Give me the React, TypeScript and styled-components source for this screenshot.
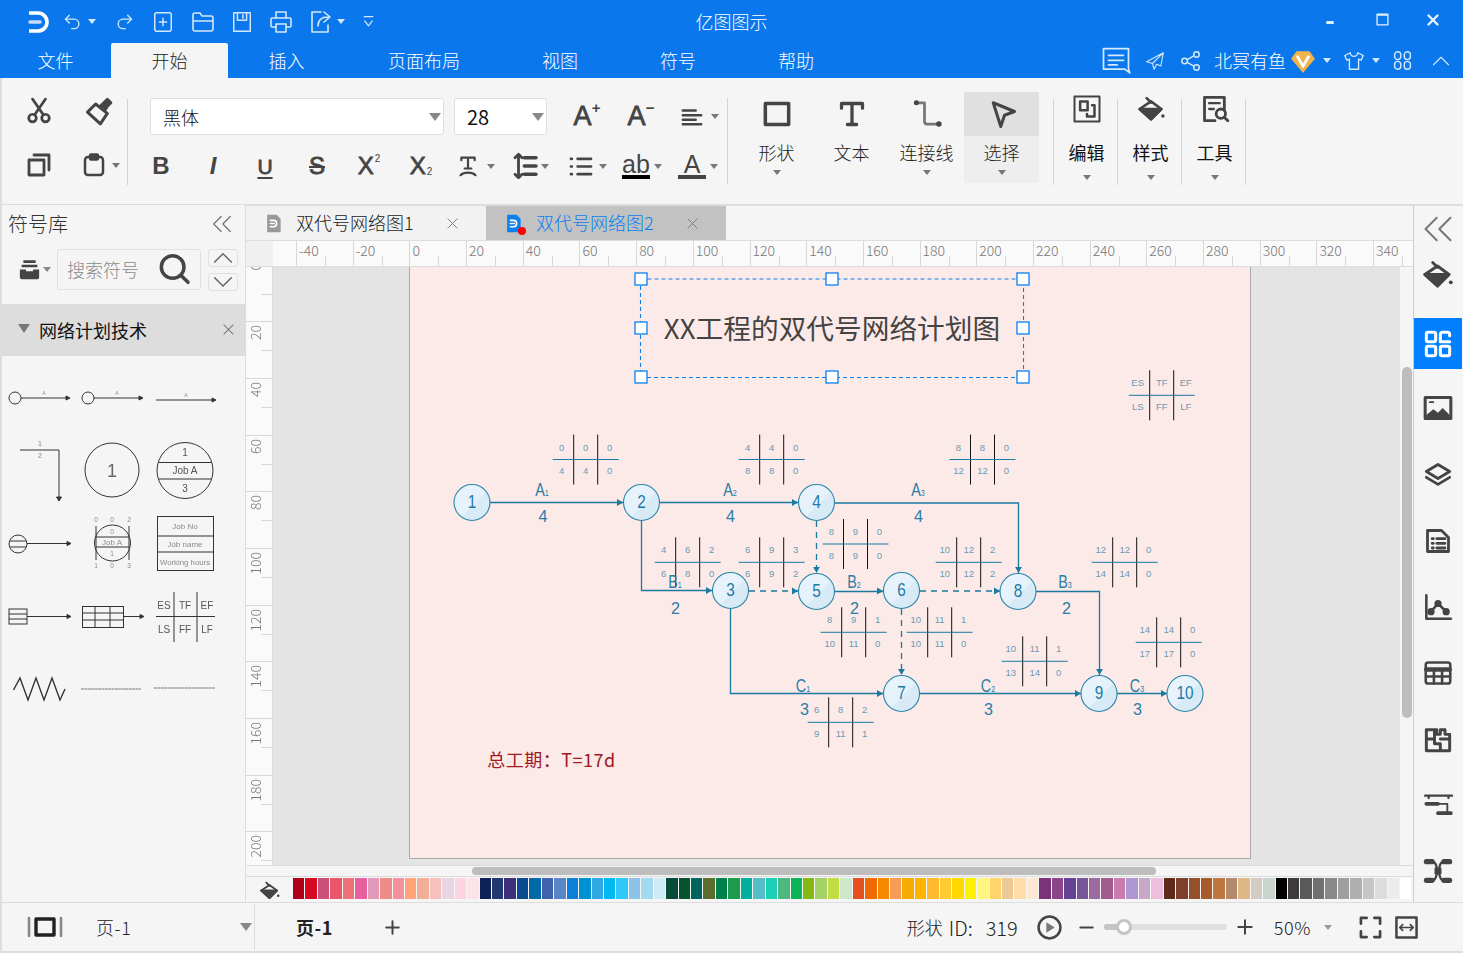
import React from "react"
import styled, {createGlobalStyle} from "styled-components"

const CN = `"Noto Sans CJK SC", "Liberation Sans", sans-serif`
const BLUE = "#0a78ec"
const LINE = "#1a7aa0"

const GlobalStyle = createGlobalStyle`
  html, body {
    margin: 0;
    padding: 0;
    background: #f5f5f5;
    font-family: ${CN};
    overflow: hidden;
  }
`

const AppLayout = styled.div`
  width: 1463px;
  height: 953px;
  display: flex;
  flex-direction: column;
  overflow: hidden;
  background: #f5f5f5;
`

/* generic drawing wrapper for the icons */
const IconSvg = styled.svg<{$w: number; $h: number; $sw: number}>`
  width: ${p => p.$w}px;
  height: ${p => p.$h}px;
  flex: none;
  display: block;
  fill: none;
  stroke: currentColor;
  stroke-width: ${p => p.$sw};
  stroke-linecap: round;
  stroke-linejoin: round;
  overflow: visible;
`

const Ico = ({w = 24, h, sw = 2, vb = "0 0 24 24", children}: {w?: number; h?: number; sw?: number; vb?: string; children: React.ReactNode}) => (
  <IconSvg $w={w} $h={h || w} $sw={sw} viewBox={vb}>{children}</IconSvg>
)

const Caret = styled.i<{$c?: string; $ml?: number; $big?: boolean}>`
  display: block;
  flex: none;
  width: 0;
  height: 0;
  margin-left: ${p => p.$ml ?? 4}px;
  border-left: ${p => (p.$big ? 6 : 4)}px solid transparent;
  border-right: ${p => (p.$big ? 6 : 4)}px solid transparent;
  border-top: ${p => (p.$big ? 8 : 5)}px solid ${p => p.$c || "#777"};
`

/* ---------- title bar ---------- */
const TitleBar = styled.div`
  height: 43px;
  background: ${BLUE};
  color: #d5e7fb;
  display: grid;
  grid-template-columns: 1fr auto 1fr;
  align-items: center;
`

const QuickTools = styled.div`
  display: flex;
  align-items: center;
  padding-left: 27px;
`

const Slot = styled.div<{$w: number}>`
  width: ${p => p.$w}px;
  flex: none;
  display: flex;
  align-items: center;
  justify-content: center;
`

const AppTitle = styled.div`
  color: #fff;
  font-size: 18px;
  font-weight: 300;
  margin-bottom: 1px;
`

const WindowButtons = styled.div`
  display: flex;
  justify-content: flex-end;
  padding: 0 5px 4px 0;
  color: #e6f1fd;
`

const MenuBar = styled.div`
  height: 35px;
  background: ${BLUE};
  display: flex;
  align-items: stretch;
`

const MenuTab = styled.div<{$w: number; $on?: boolean}>`
  width: ${p => p.$w}px;
  display: flex;
  align-items: center;
  justify-content: center;
  padding-bottom: 2px;
  box-sizing: border-box;
  font-size: 18px;
  font-weight: 300;
  border-radius: 2px 2px 0 0;
  color: ${p => (p.$on ? "#222" : "#fff")};
  background: ${p => (p.$on ? "#f5f5f5" : "transparent")};
`

const UserArea = styled.div`
  margin-left: auto;
  display: flex;
  align-items: center;
  color: #d5e7fb;
  padding-right: 12px;
`

const UserName = styled.span`
  color: #fff;
  font-size: 18px;
  font-weight: 300;
  margin: 0 4px 2px 12px;
`

/* ---------- ribbon ---------- */
const Ribbon = styled.div`
  height: 127px;
  box-sizing: border-box;
  background: #f5f5f5;
  border-left: 2px solid #ddd;
  border-bottom: 1px solid #ddd;
  display: flex;
  color: #444;
`

const ClipGroup = styled.div`
  width: 126px;
  height: 86px;
  margin-top: 21px;
  padding-left: 7px;
  box-sizing: border-box;
  border-right: 1px solid #d4d4d4;
  display: grid;
  grid-template-columns: 60px 58px;
  grid-template-rows: 24px 32px;
  row-gap: 26px;
`

const ClipCell = styled.div`
  display: flex;
  align-items: center;
  justify-content: center;
`

const PasteCell = styled(ClipCell)`
  padding-left: 5px;
`

const FormatGroup = styled.div`
  width: 600px;
  height: 86px;
  margin-top: 20px;
  box-sizing: border-box;
  border-right: 1px solid #d4d4d4;
  display: flex;
  flex-direction: column;
`

const FontRow = styled.div`
  display: flex;
  align-items: center;
  height: 37px;
  padding-left: 22px;
`

const StyleRow = styled.div`
  display: flex;
  align-items: center;
  height: 32px;
  margin-top: 15px;
  padding-left: 7px;
`

const SelectBox = styled.div<{$w: number; $ml?: number}>`
  width: ${p => p.$w}px;
  margin-left: ${p => p.$ml || 0}px;
  height: 37px;
  box-sizing: border-box;
  background: #fff;
  border: 1px solid #dedede;
  border-radius: 3px;
  display: flex;
  align-items: center;
  justify-content: space-between;
  padding: 0 2px 0 12px;
  font-size: 18px;
  color: #111;
  font-weight: 300;
`

const SizeValue = styled.span`
  font-size: 20px;
  font-weight: 400;
`

const Glyph = styled.span<{$size?: number; $italic?: boolean; $under?: boolean; $strike?: boolean; $heavy?: boolean}>`
  font-family: "Liberation Sans", sans-serif;
  font-weight: ${p => (p.$heavy ? 700 : 400)};
  font-size: ${p => p.$size || 24}px;
  line-height: 1;
  color: #444;
  -webkit-text-stroke: ${p => (p.$heavy ? 0 : 0.8)}px #444;
  font-style: ${p => (p.$italic ? "italic" : "normal")};
  text-decoration: ${p => (p.$under ? "underline" : p.$strike ? "line-through" : "none")};
  text-decoration-thickness: 2px;
  text-underline-offset: 3px;
  display: flex;
  align-items: flex-start;
`

const Mini = styled.small<{$sub?: boolean; $sign?: boolean}>`
  font-size: ${p => (p.$sign ? 15 : 10)}px;
  font-weight: ${p => (p.$sign ? 700 : 400)};
  -webkit-text-stroke: 0;
  margin-top: ${p => (p.$sub ? 13 : p.$sign ? -3 : 0)}px;
  margin-left: ${p => (p.$sign ? 0 : 1)}px;
`

const BarGlyph = styled.div<{$bar: string}>`
  font-family: "Liberation Sans", sans-serif;
  font-size: 25px;
  line-height: 20px;
  height: 25px;
  box-sizing: border-box;
  width: 28px;
  text-align: center;
  color: #444;
  border-bottom: 4px solid ${p => p.$bar};
`

const BigGroup = styled.div`
  display: flex;
  margin-top: 14px;
  margin-left: 11px;
  height: 91px;
`

const BigButton = styled.div<{$on?: boolean}>`
  width: 75px;
  border-radius: 2px;
  display: flex;
  flex-direction: column;
  align-items: center;
  background: ${p => (p.$on ? "#eee" : "transparent")};
`

const BigIcon = styled.div<{$on?: boolean}>`
  width: 100%;
  height: 44px;
  display: flex;
  align-items: center;
  justify-content: center;
  border-radius: 2px 2px 0 0;
  background: ${p => (p.$on ? "#e0e0e0" : "transparent")};
`

const BigLabel = styled.div`
  font-size: 18px;
  font-weight: 300;
  color: #222;
  line-height: 24px;
  margin-top: 4px;
  margin-bottom: 6px;
`

const ToolGroup = styled.div`
  display: flex;
  margin-top: 21px;
  margin-left: 14px;
  height: 86px;
  border-left: 1px solid #d4d4d4;
`

const ToolButton = styled.div`
  width: 61px;
  height: 86px;
  padding-left: 2px;
  border-right: 1px solid #d4d4d4;
  display: flex;
  flex-direction: column;
  align-items: center;
`

const ToolIcon = styled.div`
  height: 26px;
  margin-top: -3px;
  display: flex;
  align-items: center;
`

const ToolLabel = styled.div`
  font-size: 18px;
  color: #111;
  font-weight: 400;
  line-height: 24px;
  margin: 18px 0 11px;
`

/* ---------- main area ---------- */
const Main = styled.div`
  height: 697px;
  display: flex;
  border-left: 2px solid #ddd;
`

const Sidebar = styled.div`
  width: 244px;
  flex: none;
  box-sizing: border-box;
  border-right: 1px solid #ddd;
  background: #f5f5f5;
  display: flex;
  flex-direction: column;
`

const SideHead = styled.div`
  height: 38px;
  display: flex;
  align-items: center;
  justify-content: space-between;
  padding: 0 13px 1px 6px;
  font-size: 20px;
  font-weight: 300;
  color: #333;
  box-sizing: border-box;
`

const SearchRow = styled.div`
  display: flex;
  align-items: center;
  height: 41px;
  margin-top: 6px;
  padding-left: 17px;
  color: #444;
`

const SearchBox = styled.div`
  width: 144px;
  height: 41px;
  box-sizing: border-box;
  margin-left: 6px;
  border: 1px solid #e0e0e0;
  border-radius: 3px;
  display: flex;
  align-items: center;
  justify-content: space-between;
  padding: 0 10px 1px 9px;
  font-size: 18px;
  font-weight: 300;
  color: #8a8a8a;
`

const SearchGlass = styled.div`
  color: #444;
`

const NudgeColumn = styled.div`
  margin-left: 7px;
  display: flex;
  flex-direction: column;
  gap: 6px;
`

const NudgeButton = styled.div`
  width: 30px;
  height: 18px;
  box-sizing: border-box;
  border: 1px solid #e0e0e0;
  border-radius: 3px;
  color: #666;
  display: flex;
  align-items: center;
  justify-content: center;
`

const SectionHead = styled.div`
  height: 52px;
  margin-top: 14px;
  box-sizing: border-box;
  padding: 0 11px 1px 16px;
  background: #ddd;
  display: flex;
  align-items: center;
  font-size: 18px;
  color: #111;
`

const SectionName = styled.span`
  margin-left: 9px;
  flex: 1;
`

const DownMark = styled.i`
  width: 0;
  height: 0;
  margin-bottom: 3px;
  border-left: 6px solid transparent;
  border-right: 6px solid transparent;
  border-top: 9px solid #777;
`

const SymbolGrid = styled.div`
  display: grid;
  grid-template-columns: repeat(3, 72px);
  grid-auto-rows: 73px;
  padding: 6px 0 0 3px;
`

const SymbolSvg = styled.svg`
  width: 72px;
  height: 73px;
  display: block;
  fill: none;
  stroke: #333;
  stroke-width: 1;
  overflow: hidden;
  filter: blur(0.3px);
  text {
    stroke: none;
    fill: #8a8a8a;
    font-family: "Liberation Sans", sans-serif;
    text-anchor: middle;
  }
`

const CenterColumn = styled.div`
  width: 1167px;
  flex: none;
  display: flex;
  flex-direction: column;
`

const DocTabs = styled.div`
  height: 36px;
  box-sizing: border-box;
  border-top: 1px solid #ddd;
  border-bottom: 1px solid #ddd;
  display: flex;
  background: #f5f5f5;
`

const DocTab = styled.div<{$on?: boolean}>`
  width: 240px;
  display: flex;
  align-items: center;
  padding-left: 18px;
  box-sizing: border-box;
  background: ${p => (p.$on ? "#c2c2c2" : "#f2f2f2")};
  color: ${p => (p.$on ? "#0a7ff0" : "#222")};
  font-size: 18px;
  font-weight: 300;
`

const DocTabName = styled.span`
  margin: 0 0 2px 13px;
  width: 151px;
`

const DocIcon = styled.div`
  position: relative;
  display: flex;
`

const UnsavedDot = styled.i`
  position: absolute;
  right: -3px;
  bottom: -2px;
  width: 8px;
  height: 8px;
  border-radius: 50%;
  background: #f00;
`

const RulerRow = styled.div`
  height: 26px;
  box-sizing: border-box;
  display: flex;
  background: #fafafa;
  border-bottom: 1px solid #ddd;
`

const RulerCorner = styled.div`
  width: 27px;
  flex: none;
  background: #f0f0f0;
`

const RulerTrack = styled.div`
  flex: 1;
  display: flex;
  overflow: hidden;
  padding-left: 23px;
`

const RulerCell = styled.div`
  width: 56.7px;
  flex: none;
  box-sizing: border-box;
  border-left: 1px solid #d8d8d8;
  position: relative;
  font-size: 14px;
  font-weight: 300;
  line-height: 19px;
  padding-left: 2px;
  color: #777;
  &::after {
    content: "";
    position: absolute;
    left: 28px;
    bottom: 0;
    height: 10px;
    border-left: 1px solid #d8d8d8;
  }
`

const WorkRow = styled.div`
  height: 598px;
  display: flex;
`

const VRuler = styled.div`
  width: 27px;
  flex: none;
  box-sizing: border-box;
  background: #fafafa;
  border-right: 1px solid #ddd;
  overflow: hidden;
`

const VRulerText = styled.span`
  position: absolute;
  left: 1px;
  top: 3px;
  writing-mode: vertical-rl;
  transform: rotate(180deg);
  font-size: 14px;
  font-weight: 300;
  line-height: 16px;
  color: #777;
`

const VRulerCell = styled.div`
  height: 56.7px;
  box-sizing: border-box;
  border-top: 1px solid #d8d8d8;
  position: relative;
  &:first-child {
    margin-top: -2.4px;
  }
  &:first-child ${VRulerText} {
    top: -3px;
  }
  &::after {
    content: "";
    position: absolute;
    right: 0;
    top: 28px;
    width: 11px;
    border-top: 1px solid #d8d8d8;
  }
`

const Canvas = styled.div`
  flex: 1;
  background: #e4e4e4;
  padding-left: 136px;
  overflow: hidden;
`

const Page = styled.div`
  width: 842px;
  height: 592px;
  box-sizing: border-box;
  background: #fceae8;
  border: 1px solid #aaa;
  border-top: 0;
`

const DiagramSvg = styled.svg`
  display: block;
  margin-left: -1px;
  overflow: visible;
  text {
    font-family: "Liberation Sans", sans-serif;
    text-anchor: middle;
    dominant-baseline: central;
  }
  text.cn {
    font-family: ${CN};
  }
`

const VScrollTrack = styled.div`
  width: 13px;
  flex: none;
  background: #f5f5f5;
  padding-top: 100px;
  box-sizing: border-box;
`

const VThumb = styled.div`
  width: 10px;
  height: 351px;
  margin-left: 2px;
  border-radius: 5px;
  background: #bdbdbd;
`

const HScrollTrack = styled.div`
  height: 12px;
  box-sizing: border-box;
  border-top: 1px solid #ddd;
  border-bottom: 1px solid #ddd;
  background: #f5f5f5;
  padding: 1px 0 0 226px;
`

const HThumb = styled.div`
  width: 684px;
  height: 8px;
  border-radius: 4px;
  background: #bdbdbd;
`

const PaletteRow = styled.div`
  height: 25px;
  box-sizing: border-box;
  display: flex;
  align-items: flex-start;
  padding-top: 1px;
  color: #444;
`

const PaletteIcon = styled.div`
  width: 47px;
  flex: none;
  height: 24px;
  display: flex;
  align-items: center;
  padding-left: 14px;
  box-sizing: border-box;
`

const Swatch = styled.div<{$c: string}>`
  flex: 1;
  height: 21px;
  margin-right: 1px;
  background: ${p => p.$c};
`

const RightPanel = styled.div`
  width: 50px;
  flex: none;
  box-sizing: border-box;
  border-left: 1px solid #ccc;
  border-top: 1px solid #ddd;
  display: flex;
  flex-direction: column;
  align-items: center;
  color: #444;
`

const PanelItem = styled.div<{$on?: boolean; $h: number}>`
  width: 48px;
  flex: none;
  margin-right: 2px;
  margin-top: ${p => (p.$on ? 21 : 0)}px;
  height: ${p => p.$h}px;
  display: flex;
  align-items: center;
  justify-content: center;
  background: ${p => (p.$on ? "#0080ff" : "transparent")};
  color: ${p => (p.$on ? "#fff" : "#444")};
`

/* ---------- status bar ---------- */
const StatusBar = styled.div`
  height: 51px;
  box-sizing: border-box;
  border-top: 1px solid #ddd;
  border-left: 2px solid #ddd;
  border-bottom: 2px solid #ddd;
  display: flex;
  align-items: center;
  color: #444;
  font-size: 18px;
  font-weight: 300;
`

const PageSelect = styled.div`
  width: 227px;
  height: 46px;
  margin-left: 26px;
  box-sizing: border-box;
  display: flex;
  align-items: center;
  border-right: 1px solid #ddd;
  padding-right: 2px;
  color: #222;
`

const PageName = styled.span<{$bold?: boolean}>`
  font-weight: ${p => (p.$bold ? 700 : 300)};
  letter-spacing: 0.6px;
  color: #222;
  margin-left: ${p => (p.$bold ? 41 : 34)}px;
  flex: ${p => (p.$bold ? "none" : 1)};
`

const StatusRight = styled.div`
  margin-left: auto;
  display: flex;
  align-items: center;
  padding-right: 45px;
`

const ShapeId = styled.span`
  color: #222;
  margin-right: 19px;
  display: flex;
  align-items: center;
`

const IdValue = styled.span<{$ml: number}>`
  font-size: 20px;
  margin-left: ${p => p.$ml}px;
`

const Slider = styled.div`
  width: 123px;
  height: 6px;
  border-radius: 3px;
  background: #e0e0e0;
  margin: 0 10px;
  position: relative;
`

const SliderFill = styled.div`
  width: 20px;
  height: 6px;
  border-radius: 3px;
  background: #c4c4c4;
`

const SliderKnob = styled.div`
  position: absolute;
  left: 12px;
  top: -5px;
  width: 16px;
  height: 16px;
  box-sizing: border-box;
  border: 3px solid #c4c4c4;
  border-radius: 50%;
  background: #fff;
`

const Zoom = styled.span`
  color: #222;
  margin-left: 21px;
  letter-spacing: 0.6px;
`

/* ---------- icons ---------- */
const LogoD = ({w, c = "#fff", bar = "#c8ddf8"}: {w: number; c?: string; bar?: string}) => (
  <Ico w={w} sw={3.6}>
    <path d="M2 3h9a9 9 0 0 1 0 18H2" stroke={c} strokeLinecap="butt"/>
    <path d="M3 12h10" stroke={bar} strokeWidth={3.4}/>
  </Ico>
)

const IconBucket = ({w = 26}: {w?: number}) => (
  <Ico w={w} sw={2.4}>
    <path d="M8 2l4 4"/>
    <path d="M1.500 12L12 5l9.500 7L12 21.500z"/>
    <path d="M1.500 12h20L12 21.500z" fill="currentColor"/>
    <circle cx="23" cy="18.500" r="1.600" fill="currentColor" stroke="none"/>
  </Ico>
)

const ChevronsLeft = ({w = 20}: {w?: number}) => (
  <Ico w={w} sw={1.6}>
    <path d="M11 3L2 12l9 9M22 3l-9 9 9 9" stroke="#777"/>
  </Ico>
)

const PALETTE = [
  "#b00015", "#d60a20", "#c95078", "#ea5668", "#ef7076", "#e8609e", "#e39ab8", "#ef8c88", "#f3929e", "#fea478",
  "#f2ae96", "#f7c0bc", "#e8d5e6", "#fdd4e2", "#fde2e8", "#0f2257", "#22396f", "#3e2f7c", "#0a4a8e", "#0069a8",
  "#3e62ae", "#5a86c6", "#0b80d8", "#0090d4", "#2ea9e3", "#00b9f2", "#2fc8f8", "#8dc2ea", "#a4daf0", "#ceebf6",
  "#064a38", "#04552e", "#00645e", "#5c6b2e", "#00804a", "#1d9a4a", "#00b09e", "#55bdc6", "#1bcfb4", "#4cba80",
  "#0db358", "#84b90f", "#a5d169", "#c2dc44", "#cde8c8", "#e65020", "#f06a00", "#f58a00", "#f79c55", "#f5ab00",
  "#ffb400", "#ffba30", "#ffcb30", "#ffd900", "#fff200", "#fff580", "#ffd46a", "#ecca96", "#ffdca8", "#fee8d0",
  "#7b3377", "#8a4589", "#664296", "#785498", "#9a6aa0", "#a05a8c", "#ca7bb0", "#ae96d0", "#c8a8c8", "#ecc0dc",
  "#5e2a1a", "#7e4028", "#944f2c", "#a85a28", "#bf773f", "#b28a6e", "#e0b888", "#d4ccc4", "#c8d4cc", "#000000",
  "#3e3a3a", "#595959", "#707070", "#888888", "#9e9e9e", "#b0b0b0", "#c6c6c6", "#dcdcdc", "#ececec", "#ffffff",
]

const RULER = Array.from({length: 20}, (_, i) => -40 + i * 20)
const VRULER = Array.from({length: 11}, (_, i) => i * 20)

/* ---------- network diagram data (page coordinates) ---------- */
const NODES: [string, number, number][] = [
  ["1", 472, 502.5], ["2", 641.5, 502.5], ["3", 730.5, 590.5], ["4", 816.5, 502.5], ["5", 816.5, 591.5],
  ["6", 901.5, 590.5], ["7", 901.5, 693.5], ["8", 1018, 591.5], ["9", 1099, 693.5], ["10", 1185, 693.5],
]

const EDGES: [string, boolean][] = [
  ["M490 502.5H623", false],
  ["M660 502.5H798", false],
  ["M835 503H1018.5V573", false],
  ["M641.5 521V590.5H712", false],
  ["M749 591H798", true],
  ["M816.5 521V573", true],
  ["M835 591.5H883", false],
  ["M920 591H1000", true],
  ["M901.5 609V675", true],
  ["M1036 591.5H1099.5V675", false],
  ["M730.5 609V693.5H883", false],
  ["M920 693.5H1081", false],
  ["M1117 693.5H1167", false],
]

const ARROWS: [number, number, number][] = [
  [623, 502.5, 0], [798, 502.5, 0], [1018.5, 573, 90], [712, 590.5, 0], [798, 591, 0], [816.5, 573, 90], [883, 591, 0],
  [1000, 591, 0], [901.5, 675, 90], [1099.5, 675, 90], [883, 693.5, 0], [1081, 693.5, 0], [1167, 693.5, 0],
]

const LABELS: [string, string, number, number][] = [
  ["A", "1", 542, 489], ["A", "2", 730, 489], ["A", "3", 918, 489],
  ["B", "1", 675, 581], ["B", "2", 854, 581], ["B", "3", 1065, 581],
  ["C", "1", 803, 685], ["C", "2", 988, 685], ["C", "3", 1137, 685],
]

const DURATIONS: [string, number, number][] = [
  ["4", 543, 516], ["4", 730.5, 516], ["4", 918.5, 516], ["2", 675.5, 608], ["2", 854.5, 608], ["2", 1066.5, 608],
  ["3", 804.5, 709], ["3", 988.5, 709], ["3", 1137.5, 709],
]

const GRIDS: [number, number, string[]][] = [
  [585.7, 459.5, ["0", "0", "0", "4", "4", "0"]],
  [771.7, 459.5, ["4", "4", "0", "8", "8", "0"]],
  [982.5, 459.5, ["8", "8", "0", "12", "12", "0"]],
  [687.7, 562.3, ["4", "6", "2", "6", "8", "0"]],
  [771.7, 562.3, ["6", "9", "3", "6", "9", "2"]],
  [855.5, 544, ["8", "9", "0", "8", "9", "0"]],
  [968.7, 562.3, ["10", "12", "2", "10", "12", "2"]],
  [1124.7, 562.3, ["12", "12", "0", "14", "14", "0"]],
  [1161.7, 395.3, ["ES", "TF", "EF", "LS", "FF", "LF"]],
  [853.7, 632.3, ["8", "9", "1", "10", "11", "0"]],
  [939.7, 632.3, ["10", "11", "1", "10", "11", "0"]],
  [1034.7, 661.3, ["10", "11", "1", "13", "14", "0"]],
  [1168.7, 642.3, ["14", "14", "0", "17", "17", "0"]],
  [840.7, 722.3, ["6", "8", "2", "9", "11", "1"]],
]

const HANDLES: [number, number][] = [
  [641, 279], [832, 279], [1023, 279], [641, 328], [1023, 328], [641, 377], [832, 377], [1023, 377],
]

const TimeGrid = ({x, y, vals}: {x: number; y: number; vals: string[]}) => (
  <g>
    <path d={`M${x - 12} ${y - 25}v50M${x + 12} ${y - 25}v50`} stroke="#111" strokeWidth={1}/>
    <path d={`M${x - 33} ${y}h66`} stroke={LINE} strokeWidth={1}/>
    {vals.map((v, i) => (
      <text key={i} x={x + (i % 3 - 1) * 24} y={y + (i < 3 ? -12.5 : 11)} fontSize={9.5} fill="#6a9ab3">{v}</text>
    ))}
  </g>
)

const Diagram = () => (
  <DiagramSvg width={842} height={592} viewBox="409 267 842 592">
    <defs>
      <linearGradient id="nodeFill" x1="0" y1="0" x2="1" y2="1">
        <stop offset="0" stopColor="#e8f4fc"/>
        <stop offset="0.55" stopColor="#e6f2fb"/>
        <stop offset="0.56" stopColor="#d9eaf7"/>
        <stop offset="1" stopColor="#d9eaf7"/>
      </linearGradient>
    </defs>
    {GRIDS.map(([x, y, vals], i) => <TimeGrid key={i} x={x} y={y} vals={vals}/>)}
    {EDGES.map(([d, dashed], i) => (
      <path key={i} d={d} fill="none" stroke={LINE} strokeWidth={1.3} strokeDasharray={dashed ? "6 5" : undefined}/>
    ))}
    {ARROWS.map(([x, y, r], i) => (
      <path key={i} d="M0 0l-6-3.4v6.8z" fill={LINE} transform={`translate(${x} ${y}) rotate(${r})`}/>
    ))}
    {NODES.map(([n, x, y]) => (
      <g key={n}>
        <circle cx={x} cy={y} r={18} fill="url(#nodeFill)" stroke="#2a85a8" strokeWidth={1.1}/>
        <text transform={`translate(${x} ${y}) scale(.85 1)`} fontSize={18} fill="#1c7aa5">{n}</text>
      </g>
    ))}
    {LABELS.map(([a, s, x, y], i) => (
      <text key={i} transform={`translate(${x} ${y}) scale(.8 1)`} fontSize={18} fill="#2a7ea6">{a}<tspan fontSize={9} dy={4}>{s}</tspan></text>
    ))}
    {DURATIONS.map(([t, x, y], i) => (
      <text key={i} transform={`translate(${x} ${y}) scale(.95 1)`} fontSize={17} fill="#2a7ea6">{t}</text>
    ))}
    <rect x={640.5} y={279} width={383} height={98.5} fill="none" stroke="#0a7ff0" strokeWidth={1.1} strokeDasharray="4 3"/>
    {HANDLES.map(([x, y], i) => (
      <rect key={i} x={x - 6} y={y - 6} width={12} height={12} fill="#fff" stroke="#0a7ff0" strokeWidth={1.3}/>
    ))}
    <text className="cn" x={832} y={327} fontSize={27.7} fill="#444">XX工程的双代号网络计划图</text>
    <text className="cn" x={551.5} y={758.5} fontSize={18} letterSpacing={0.5} fill="#a01822">总工期：T=17d</text>
  </DiagramSvg>
)

/* ---------- symbol library ---------- */
const Arrowed = ({x1, x2, y}: {x1: number; x2: number; y: number}) => (
  <>
    <path d={`M${x1} ${y}H${x2}`}/>
    <path d={`M${x2 + 1} ${y}l-4-2v4z`} fill="#333"/>
  </>
)

const SYMBOLS: React.ReactNode[] = [
  <><circle cx={15} cy={398} r={6}/><Arrowed x1={21} x2={69} y={398}/><text x={44} y={395} fontSize={5}>A</text></>,
  <><circle cx={88} cy={398} r={6}/><Arrowed x1={94} x2={142} y={398}/><text x={117} y={395} fontSize={5}>A</text></>,
  <><Arrowed x1={156} x2={215} y={400}/><text x={186} y={397} fontSize={5}>A</text></>,
  <><path d="M20 450H59V499"/><path d="M59 501l-2.5-4h5z" fill="#333"/><text x={40} y={446} fontSize={7}>1</text><text x={40} y={458} fontSize={7}>2</text></>,
  <><circle cx={112} cy={470} r={27}/><text x={112} y={477} fontSize={18} style={{fill: "#666"}}>1</text></>,
  <><circle cx={185} cy={470.5} r={28}/><path d="M159 462.5H211M159 479H211"/><text x={185} y={456} fontSize={10} style={{fill: "#555"}}>1</text><text x={185} y={474} fontSize={10} style={{fill: "#555"}}>Job A</text><text x={185} y={492} fontSize={10} style={{fill: "#555"}}>3</text></>,
  <><circle cx={18} cy={544} r={9}/><path d="M10 541H26M10 547H26"/><Arrowed x1={27} x2={70} y={543.5}/></>,
  <><path d="M96 526V560M129 526V560M96 537H129M96 547H129"/><circle cx={112.5} cy={543} r={18}/><text x={112} y={545} fontSize={8}>Job A</text><text x={112} y={534} fontSize={6.5}>0</text><text x={112} y={556} fontSize={6.5}>1</text><text x={96} y={522} fontSize={6.5}>0</text><text x={112} y={522} fontSize={6.5}>0</text><text x={129} y={522} fontSize={6.5}>2</text><text x={96} y={568} fontSize={6.5}>1</text><text x={112} y={568} fontSize={6.5}>0</text><text x={129} y={568} fontSize={6.5}>3</text></>,
  <><rect x={157.5} y={516.5} width={56} height={54}/><path d="M157 536H214M157 552H214"/><text x={185} y={529} fontSize={8}>Job No</text><text x={185} y={547} fontSize={8}>Job name</text><text x={185} y={565} fontSize={7.8}>Working hours</text></>,
  <><rect x={9} y={609} width={18} height={15}/><path d="M9 614H27M9 619H27"/><Arrowed x1={27} x2={70} y={616.5}/></>,
  <><rect x={82.5} y={606.5} width={41} height={21}/><path d="M82 613H124M82 620H124M95 606V628M110 606V628"/><Arrowed x1={124} x2={143} y={616.5}/></>,
  <><path d="M174 592V642M197 592V642M156 616.5H215"/><text x={164} y={609} fontSize={10} style={{fill: "#555"}}>ES</text><text x={185} y={609} fontSize={10} style={{fill: "#555"}}>TF</text><text x={207} y={609} fontSize={10} style={{fill: "#555"}}>EF</text><text x={164} y={633} fontSize={10} style={{fill: "#555"}}>LS</text><text x={185} y={633} fontSize={10} style={{fill: "#555"}}>FF</text><text x={207} y={633} fontSize={10} style={{fill: "#555"}}>LF</text></>,
  <path d="M13.5 690L20 678L28 700L36 678L44 700L52 678L60 700L65 689" strokeWidth={1.4}/>,
  <path d="M81 689H141" stroke="#777" strokeDasharray="3 .4"/>,
  <path d="M154 688H215" stroke="#777" strokeDasharray="3 .4"/>,
]

const CELLS = SYMBOLS.map((s, i) => {
  const x = 5 + (i % 3) * 72
  const y = 362 + Math.floor(i / 3) * 73
  return <SymbolSvg key={i} viewBox={`${x} ${y} 72 73`}>{s}</SymbolSvg>
})

const App = () => (
  <AppLayout>
    <GlobalStyle/>

    <TitleBar>
      <QuickTools>
        <Slot $w={24}><LogoD w={24}/></Slot>
        <Slot $w={12}/>
        <Slot $w={18}><Ico w={19} sw={1.7}><path d="M8 4L3 9l5 5M3 9h11a6 6 0 0 1 0 12h-3"/></Ico></Slot>
        <Slot $w={18}><Caret $c="#d5e7fb" $ml={3}/></Slot>
        <Slot $w={15}/>
        <Slot $w={20}><Ico w={19} sw={1.7}><path d="M16 4l5 5-5 5M21 9H10a6 6 0 0 0 0 12h3"/></Ico></Slot>
        <Slot $w={18}/>
        <Slot $w={21}><Ico w={22} sw={1.6}><rect x="3" y="2" width="18" height="20" rx="2"/><path d="M12 8v8M8 12h8"/></Ico></Slot>
        <Slot $w={18}/>
        <Slot $w={23}><Ico w={24} sw={1.6}><path d="M2 19V5a2 2 0 0 1 2-2h5l2 3h9a2 2 0 0 1 2 2v11a2 2 0 0 1-2 2H4a2 2 0 0 1-2-2zM2 11h20"/></Ico></Slot>
        <Slot $w={17}/>
        <Slot $w={21}><Ico w={22} sw={1.6}><path d="M3 2h18v20H3zM7 2v8h10V2M13 4v4"/></Ico></Slot>
        <Slot $w={17}/>
        <Slot $w={24}><Ico w={24} sw={1.6}><path d="M7 8V2h10v6M7 17H3a1 1 0 0 1-1-1V9a1 1 0 0 1 1-1h18a1 1 0 0 1 1 1v7a1 1 0 0 1-1 1h-4M7 14h10v8H7z"/></Ico></Slot>
        <Slot $w={16}/>
        <Slot $w={24}><Ico w={24} sw={1.6}><path d="M12 2H3v20h16v-7M9 16c0-6 4-9 10-9M15 2l6 5-6 5"/></Ico></Slot>
        <Slot $w={13}><Caret $c="#d5e7fb" $ml={3}/></Slot>
        <Slot $w={15}/>
        <Slot $w={14}><Ico w={13} sw={2.2}><path d="M4 3h16M5 11l7 9 7-9"/></Ico></Slot>
      </QuickTools>
      <AppTitle>亿图图示</AppTitle>
      <WindowButtons>
        <Slot $w={52}><Ico w={10} sw={7}><path d="M3 18h18" strokeLinecap="butt"/></Ico></Slot>
        <Slot $w={52}><Ico w={13} sw={2.4}><path d="M2 2h20v20H2zM2 4h20"/></Ico></Slot>
        <Slot $w={50}><Ico w={12} sw={4.8}><path d="M3 3l18 18M21 3L3 21"/></Ico></Slot>
      </WindowButtons>
    </TitleBar>

    <MenuBar>
      <MenuTab $w={111}>文件</MenuTab>
      <MenuTab $w={117} $on>开始</MenuTab>
      <MenuTab $w={117}>插入</MenuTab>
      <MenuTab $w={158}>页面布局</MenuTab>
      <MenuTab $w={114}>视图</MenuTab>
      <MenuTab $w={122}>符号</MenuTab>
      <MenuTab $w={114}>帮助</MenuTab>
      <UserArea>
        <Slot $w={30}><Ico w={30} sw={1.4}><path d="M2 2h20v16.5l1 3-4-3H2zM6 7.5h12M6 11.5h12M6 15h7"/></Ico></Slot>
        <Slot $w={14}/>
        <Slot $w={20}><Ico w={20} sw={1.3}><path d="M22 2L2 13l7 2zM22 2L9 15l2 7 3-6 5 2z"/></Ico></Slot>
        <Slot $w={15}/>
        <Slot $w={22}><Ico w={22} sw={1.6}><circle cx="18" cy="5" r="3"/><circle cx="5" cy="12" r="3"/><circle cx="18" cy="19" r="3"/><path d="M8 10.5l7-4M8 13.5l7 4"/></Ico></Slot>
        <UserName>北冥有鱼</UserName>
        <Slot $w={26}>
          <Ico w={26} h={26} sw={2.6}>
            <path d="M6 3h12l5 7-11 13L1 10z" fill="#f2b44a" stroke="none"/>
            <path d="M7 8l5 9 5-9" stroke="#fff"/>
          </Ico>
        </Slot>
        <Caret $c="#d5e7fb" $ml={7}/>
        <Slot $w={11}/>
        <Slot $w={24}><Ico w={22} sw={1.5}><path d="M8 3L2 6l2 5 3-1v11h10V10l3 1 2-5-6-3a4 4 0 0 1-8 0z"/></Ico></Slot>
        <Caret $c="#d5e7fb" $ml={6}/>
        <Slot $w={11}/>
        <Slot $w={22}><Ico w={21} sw={1.6}><rect x="3" y="2" width="7" height="9" rx="3.5"/><rect x="14" y="2" width="7" height="9" rx="3.5"/><rect x="3" y="13" width="7" height="9" rx="3.5"/><rect x="14" y="13" width="7" height="9" rx="3.5"/></Ico></Slot>
        <Slot $w={18}/>
        <Slot $w={20}><Ico w={18} sw={1.5}><path d="M2 17l10-10 10 10"/></Ico></Slot>
      </UserArea>
    </MenuBar>

    <Ribbon>
      <ClipGroup>
        <ClipCell><Ico w={26} sw={2.5}><circle cx="6" cy="18.5" r="3.5"/><circle cx="18" cy="18.5" r="3.5"/><path d="M8 15.5L18 1M16 15.5L6 1"/></Ico></ClipCell>
        <ClipCell><Ico w={28} sw={2.5}><path d="M10 6l10 8-6 9L3 13z" strokeWidth={2.6}/><path d="M14 8l3-3 3-3 3 3-3 3-2 3" fill="currentColor"/></Ico></ClipCell>
        <ClipCell><Ico w={24} sw={2.8}><rect x="2" y="7" width="15" height="15"/><path d="M7 2h15v15"/></Ico></ClipCell>
        <PasteCell>
          <Ico w={24} sw={2.5}><rect x="3" y="4" width="18" height="18" rx="3"/><rect x="8" y="1.5" width="8" height="5" rx="1" fill="currentColor"/></Ico>
          <Caret $ml={6}/>
        </PasteCell>
      </ClipGroup>

      <FormatGroup>
        <FontRow>
          <SelectBox $w={294}>黑体<Caret $big $ml={0} $c="#888"/></SelectBox>
          <SelectBox $w={93} $ml={10}><SizeValue>28</SizeValue><Caret $big $ml={0} $c="#888"/></SelectBox>
          <Slot $w={80}><Glyph $size={27}>A<Mini $sign>+</Mini></Glyph></Slot>
          <Slot $w={28}><Glyph $size={27}>A<Mini $sign>−</Mini></Glyph></Slot>
          <Slot $w={26}/>
          <Ico w={22} sw={2.8}><path d="M2 5h14M2 10h20M2 15h14M2 20h20"/></Ico>
          <Caret $ml={8}/>
        </FontRow>
        <StyleRow>
          <Slot $w={52}><Glyph $heavy>B</Glyph></Slot>
          <Slot $w={52}><Glyph $heavy $italic>I</Glyph></Slot>
          <Slot $w={52}><Glyph $under $size={21}>U</Glyph></Slot>
          <Slot $w={52}><Glyph $strike>S</Glyph></Slot>
          <Slot $w={52}><Glyph>X<Mini>2</Mini></Glyph></Slot>
          <Slot $w={52}><Glyph>X<Mini $sub>2</Mini></Glyph></Slot>
          <Slot $w={11}/>
          <Ico w={20} sw={2.6}><path d="M4 5V2h16v3M12 2v13M8 15h8M3 23c4-4 14-4 18 0"/></Ico>
          <Caret $ml={9}/>
          <Slot $w={13}/>
          <Ico w={28} sw={2.4}><path d="M9 2v20M6 5l3-3 3 3M6 19l3 3 3-3"/><path d="M14 5h10M14 12h10M14 19h10" strokeWidth={3}/></Ico>
          <Caret $ml={5}/>
          <Slot $w={20}/>
          <Ico w={23} sw={2.8}><path d="M9 4h14M9 12h14M9 20h14M2 4h1M2 12h1M2 20h1"/></Ico>
          <Caret $ml={7}/>
          <Slot $w={15}/>
          <BarGlyph $bar="#000">ab</BarGlyph>
          <Caret/>
          <Slot $w={16}/>
          <BarGlyph $bar="#444">A</BarGlyph>
          <Caret/>
        </StyleRow>
      </FormatGroup>

      <BigGroup>
        <BigButton>
          <BigIcon><Ico w={28} sw={3}><rect x="2" y="3" width="20" height="18"/></Ico></BigIcon>
          <BigLabel>形状</BigLabel>
          <Caret $ml={0}/>
        </BigButton>
        <BigButton>
          <BigIcon><Ico w={28} sw={2.8}><path d="M3 7V3h18v4M12 3v18M8 21h8"/></Ico></BigIcon>
          <BigLabel>文本</BigLabel>
        </BigButton>
        <BigButton>
          <BigIcon>
            <Ico w={30} sw={2.2}>
              <path d="M4 3h6v15a2 2 0 0 0 2 2h9" stroke="#777"/>
              <circle cx="3.5" cy="3" r="2" fill="#444" stroke="none"/>
              <circle cx="21.5" cy="20" r="2.2" fill="#444" stroke="none"/>
            </Ico>
          </BigIcon>
          <BigLabel>连接线</BigLabel>
          <Caret $ml={0}/>
        </BigButton>
        <BigButton $on>
          <BigIcon $on><Ico w={30} sw={2.4}><path d="M5 3l17 7-8 3-3 9z"/></Ico></BigIcon>
          <BigLabel>选择</BigLabel>
          <Caret $ml={0}/>
        </BigButton>
      </BigGroup>

      <ToolGroup>
        <ToolButton>
          <ToolIcon>
            <Ico w={30} sw={1.6}>
              <path d="M2 2h20v20H2z"/>
              <path d="M6.5 6h6v7h-6zM16 9h2v9h-6v-2" strokeWidth={2}/>
            </Ico>
          </ToolIcon>
          <ToolLabel>编辑</ToolLabel>
          <Caret $ml={0}/>
        </ToolButton>
        <ToolButton>
          <ToolIcon><IconBucket w={26}/></ToolIcon>
          <ToolLabel>样式</ToolLabel>
          <Caret $ml={0}/>
        </ToolButton>
        <ToolButton>
          <ToolIcon>
            <Ico w={28} sw={2.4}>
              <path d="M12 22H3V2h17v11"/>
              <path d="M7 7h9M7 12h4" strokeWidth={2}/>
              <circle cx="17" cy="16" r="4"/>
              <path d="M20 19l3 3"/>
            </Ico>
          </ToolIcon>
          <ToolLabel>工具</ToolLabel>
          <Caret $ml={0}/>
        </ToolButton>
      </ToolGroup>
    </Ribbon>

    <Main>
      <Sidebar>
        <SideHead>符号库<ChevronsLeft/></SideHead>
        <SearchRow>
          <Ico w={21} sw={2}>
            <path d="M5 3h14M3 8h18" strokeWidth={3} strokeLinecap="butt"/>
            <path d="M1 12h7v2h8v-2h7v9a2 2 0 0 1-2 2H3a2 2 0 0 1-2-2z" fill="currentColor" stroke="none"/>
          </Ico>
          <Caret $ml={3} $c="#888"/>
          <SearchBox>
            搜索符号
            <SearchGlass>
              <Ico w={32} sw={2.6}><circle cx="11" cy="10.5" r="8.5"/><path d="M17.5 17l5 5"/></Ico>
            </SearchGlass>
          </SearchBox>
          <NudgeColumn>
            <NudgeButton><Ico w={20} h={11} sw={1.8} vb="0 0 24 13"><path d="M2 12L12 2l10 10"/></Ico></NudgeButton>
            <NudgeButton><Ico w={20} h={11} sw={1.8} vb="0 0 24 13"><path d="M2 2l10 10L22 2"/></Ico></NudgeButton>
          </NudgeColumn>
        </SearchRow>
        <SectionHead>
          <DownMark/>
          <SectionName>网络计划技术</SectionName>
          <Ico w={11} sw={2.2}><path d="M2 2l20 20M22 2L2 22" stroke="#777"/></Ico>
        </SectionHead>
        <SymbolGrid>{CELLS}</SymbolGrid>
      </Sidebar>

      <CenterColumn>
        <DocTabs>
          <DocTab>
            <DocIcon>
              <Ico w={19} sw={2}>
                <path d="M4 1h12l5 5v17H4z" fill="#999" stroke="none"/>
                <path d="M8 8h4a4 4 0 0 1 0 8H8M8 12h5" stroke="#fff"/>
              </Ico>
            </DocIcon>
            <DocTabName>双代号网络图1</DocTabName>
            <Ico w={11} sw={2}><path d="M2 2l20 20M22 2L2 22" stroke="#777"/></Ico>
          </DocTab>
          <DocTab $on>
            <DocIcon>
              <Ico w={19} sw={2}>
                <path d="M4 1h12l5 5v17H4z" fill="#0a7ff0" stroke="none"/>
                <path d="M8 8h4a4 4 0 0 1 0 8H8M8 12h5" stroke="#fff"/>
              </Ico>
              <UnsavedDot/>
            </DocIcon>
            <DocTabName>双代号网络图2</DocTabName>
            <Ico w={11} sw={2}><path d="M2 2l20 20M22 2L2 22" stroke="#777"/></Ico>
          </DocTab>
        </DocTabs>

        <RulerRow>
          <RulerCorner/>
          <RulerTrack>
            {RULER.map(n => <RulerCell key={n}>{n}</RulerCell>)}
          </RulerTrack>
        </RulerRow>

        <WorkRow>
          <VRuler>
            {VRULER.map(n => <VRulerCell key={n}><VRulerText>{n}</VRulerText></VRulerCell>)}
          </VRuler>
          <Canvas>
            <Page><Diagram/></Page>
          </Canvas>
          <VScrollTrack><VThumb/></VScrollTrack>
        </WorkRow>

        <HScrollTrack><HThumb/></HScrollTrack>

        <PaletteRow>
          <PaletteIcon><IconBucket w={19}/></PaletteIcon>
          {PALETTE.map(c => <Swatch key={c} $c={c}/>)}
        </PaletteRow>
      </CenterColumn>

      <RightPanel>
        <PanelItem $h={45}><ChevronsLeft w={30}/></PanelItem>
        <PanelItem $h={46}><IconBucket w={29}/></PanelItem>
        <PanelItem $on $h={51}>
          <Ico w={28} sw={2.6}><rect x="2" y="2" width="8" height="8" rx="1.5"/><path d="M14 10V4a2 2 0 0 1 2-2h4a2 2 0 0 1 2 2v1M14 10h8"/><rect x="2" y="14" width="8" height="8" rx="1.5"/><rect x="14" y="14" width="8" height="8" rx="1.5"/></Ico>
        </PanelItem>
        <PanelItem $h={78}>
          <Ico w={28} sw={2.6}><rect x="1" y="3" width="22" height="18"/><path d="M2 18l6-5 4 3 4-4 6 6v2H2z" fill="currentColor" stroke="none"/><path d="M5 7h3" strokeWidth={1.5}/></Ico>
        </PanelItem>
        <PanelItem $h={56}>
          <Ico w={28} sw={2.4}><path d="M12 3l10 6-10 6L2 9zM2 14l10 6 10-6"/></Ico>
        </PanelItem>
        <PanelItem $h={76}>
          <Ico w={28} sw={2.4}><path d="M3 3h12l6 6v12H3zM7 10h1M7 14h1M7 18h1M11 10h7M11 14h7M11 18h7"/></Ico>
        </PanelItem>
        <PanelItem $h={56}>
          <Ico w={28} sw={2.2}><path d="M2 2v20h21"/><path d="M6 16l6-7 7 7"/><circle cx="6" cy="16" r="2" fill="currentColor"/><circle cx="12" cy="9" r="2" fill="currentColor"/><circle cx="19" cy="16" r="2" fill="currentColor"/></Ico>
        </PanelItem>
        <PanelItem $h={76}>
          <Ico w={28} sw={2.2}><rect x="1.5" y="3" width="21" height="18" rx="2"/><path d="M2 9h20" strokeWidth={4}/><path d="M2 15h20M8.5 10v11M15.5 10v11"/></Ico>
        </PanelItem>
        <PanelItem $h={56}>
          <Ico w={28} sw={2.5}><path d="M2 4h9v4h3V4h4v4h4v14H2zM2 12h7v4h5v6M9 4v8M14 12h8"/></Ico>
        </PanelItem>
        <PanelItem $h={76}>
          <Ico w={28} sw={2.6}><path d="M1 4h23M4 4v2M21 4v2" strokeWidth={2}/><path d="M2 11h10M12 19h11" strokeWidth={3.2}/><path d="M12 11h8v8" strokeWidth={1.6}/></Ico>
        </PanelItem>
        <PanelItem $h={56}>
          <Ico w={28} sw={2}><path d="M7 4c5 0 3 8 5 8s0-8 5-8M7 20c5 0 3-8 5-8s0 8 5 8"/><path d="M2 4h5M17 4h5M2 20h5M17 20h5" strokeWidth={4.4}/><rect x="10" y="10" width="4" height="4" fill="currentColor"/></Ico>
        </PanelItem>
      </RightPanel>
    </Main>

    <StatusBar>
      <PageSelect>
        <Ico w={34} h={22} sw={2} vb="0 0 34 22">
          <path d="M8 3h18v16H8z" strokeWidth={3.4} strokeLinecap="butt"/>
          <path d="M1 2v18M33 2v18" stroke="#888" strokeWidth={2.6}/>
        </Ico>
        <PageName>页-1</PageName>
        <Caret $big $ml={0} $c="#888"/>
      </PageSelect>
      <PageName $bold>页-1</PageName>
      <Slot $w={52}/>
      <Ico w={15} sw={3.2}><path d="M12 2v20M2 12h20"/></Ico>
      <StatusRight>
        <ShapeId>形状<IdValue $ml={6}>ID:</IdValue><IdValue $ml={13}>319</IdValue></ShapeId>
        <Ico w={25} sw={2.4}>
          <circle cx="12" cy="12" r="10.5"/>
          <path d="M9 7l8 5-8 5z" fill="#777" stroke="none"/>
        </Ico>
        <Slot $w={17}/>
        <Ico w={15} sw={3}><path d="M2 12h20"/></Ico>
        <Slider><SliderFill/><SliderKnob/></Slider>
        <Ico w={16} sw={3}><path d="M12 2v20M2 12h20"/></Ico>
        <Zoom>50%</Zoom>
        <Caret $ml={13} $c="#999"/>
        <Slot $w={27}/>
        <Ico w={23} sw={2.8}><path d="M2 8V2h6M16 2h6v6M22 16v6h-6M8 22H2v-6"/></Ico>
        <Slot $w={13}/>
        <Ico w={23} sw={2.6}><rect x="1.5" y="1.5" width="21" height="21"/><path d="M5 12h14M8 9l-3 3 3 3M16 9l3 3-3 3" strokeWidth={1.8}/></Ico>
      </StatusRight>
    </StatusBar>
  </AppLayout>
)

export default App
